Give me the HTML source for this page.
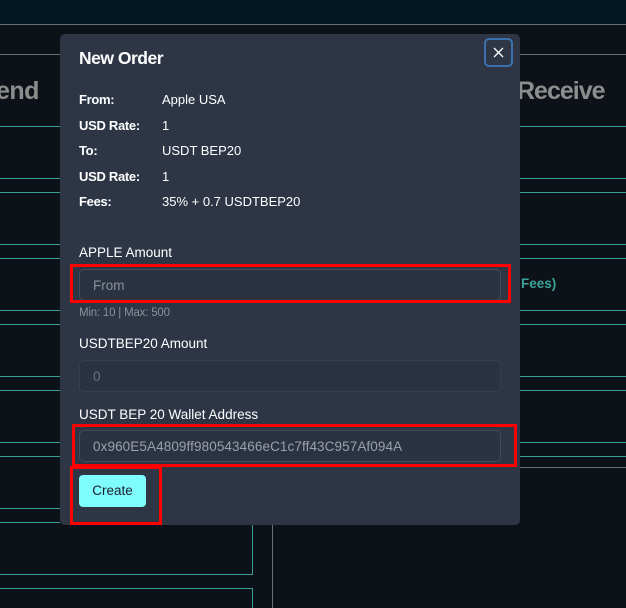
<!DOCTYPE html>
<html><head><meta charset="utf-8"><style>
*{margin:0;padding:0;box-sizing:border-box}
body{width:626px;height:608px;overflow:hidden;background:#0d1118;font-family:"Liberation Sans",sans-serif;position:relative}
.a{position:absolute}
.hl{position:absolute;height:1px;background:#3b9c92}
.g{background:#6b6f75}
.lbl{position:absolute;left:79px;font-size:13px;font-weight:bold;color:#fff;letter-spacing:-0.3px}
.val{position:absolute;left:162px;font-size:13px;color:#fff;letter-spacing:0px}
.inp{position:absolute;left:79px;width:422px;height:32px;border:1px solid #414b5b;border-radius:5px;background:#2b3342;color:#8a909a;font-size:13.5px;padding:8px 13px}
.red{position:absolute;border:3px solid #ff0000}
</style></head><body>
<div class="a" style="left:0;top:0;width:626px;height:24px;background:#021624"></div>
<div class="hl g" style="top:24px;left:0;width:626px"></div>
<div class="hl g" style="top:54px;left:0;width:626px"></div>
<div class="a" style="left:-4px;top:77px;font-size:25px;color:#8d8d8d;font-weight:bold;letter-spacing:-0.5px">end</div>
<div class="a" style="left:517px;top:77px;font-size:25px;color:#8d8d8d;font-weight:bold;letter-spacing:-1px">Receive</div>
<div class="hl" style="top:126px;left:0;width:626px"></div>
<div class="hl" style="top:178px;left:0;width:626px"></div>
<div class="hl" style="top:192px;left:0;width:626px"></div>
<div class="hl" style="top:244px;left:0;width:626px"></div>
<div class="hl" style="top:258px;left:0;width:626px"></div>
<div class="a" style="left:521px;top:276px;font-size:13.5px;font-weight:bold;color:#3aa39a">Fees)</div>
<div class="hl" style="top:310px;left:0;width:626px"></div>
<div class="hl" style="top:324px;left:0;width:626px"></div>
<div class="hl" style="top:376px;left:0;width:626px"></div>
<div class="hl" style="top:390px;left:0;width:626px"></div>
<div class="hl" style="top:442px;left:0;width:626px"></div>
<div class="hl" style="top:456px;left:0;width:626px"></div>
<div class="hl g" style="top:467px;left:273px;width:353px"></div>
<div class="hl" style="top:508px;left:0;width:60px"></div>
<div class="hl" style="top:522px;left:0;width:60px"></div>
<div class="hl" style="top:574px;left:0;width:253px"></div>
<div class="hl" style="top:588px;left:0;width:253px"></div>
<div class="a" style="left:252px;top:522px;width:1px;height:52px;background:#3b9c92"></div>
<div class="a" style="left:252px;top:588px;width:1px;height:20px;background:#3b9c92"></div>
<div class="a" style="left:272px;top:525px;width:1px;height:83px;background:#6b6f75"></div>

<div class="a" style="left:60px;top:34px;width:460px;height:491px;background:#2e3646;border-radius:5px"></div>
<div class="a" style="left:484px;top:38px;width:29px;height:29px;border:2px solid #3b72ad;border-radius:5px">
<svg width="25" height="25" viewBox="0 0 25 25" style="position:absolute;left:0;top:0"><path d="M8 8L17 17M17 8L8 17" stroke="#fff" stroke-width="1.3" fill="none"/></svg></div>
<div class="a" style="left:79px;top:48px;font-size:17.5px;font-weight:bold;color:#fff;letter-spacing:-0.5px">New Order</div>
<div class="lbl" style="top:92px">From:</div><div class="val" style="top:92px">Apple USA</div>
<div class="lbl" style="top:118px">USD Rate:</div><div class="val" style="top:118px">1</div>
<div class="lbl" style="top:143px">To:</div><div class="val" style="top:143px">USDT BEP20</div>
<div class="lbl" style="top:169px">USD Rate:</div><div class="val" style="top:169px">1</div>
<div class="lbl" style="top:194px">Fees:</div><div class="val" style="top:194px">35% + 0.7 USDTBEP20</div>

<div class="a" style="left:79px;top:245px;font-size:13.5px;color:#fff">APPLE Amount</div>
<div class="inp" style="top:269px">From</div>
<div class="red" style="left:70px;top:264px;width:441px;height:39px"></div>
<div class="a" style="left:79px;top:307px;font-size:11.5px;color:#8a909a;letter-spacing:-0.2px">Min: 10 | Max: 500</div>
<div class="a" style="left:79px;top:336px;font-size:13.5px;color:#fff">USDTBEP20 Amount</div>
<div class="inp" style="top:360px;border-color:#364050;color:#6b727d">0</div>
<div class="a" style="left:79px;top:407px;font-size:13.5px;color:#fff">USDT BEP 20 Wallet Address</div>
<div class="inp" style="top:430px;font-size:13.5px;color:#9ba1aa;letter-spacing:0.1px">0x960E5A4809ff980543466eC1c7ff43C957Af094A</div>
<div class="red" style="left:72px;top:424px;width:445px;height:43px"></div>
<div class="a" style="left:79px;top:475px;width:67px;height:32px;background:#7ffcfc;border-radius:4px;color:#1a2030;font-size:13.5px;text-align:center;line-height:32px">Create</div>
<div class="red" style="left:70px;top:466px;width:92px;height:59px"></div>
</body></html>
